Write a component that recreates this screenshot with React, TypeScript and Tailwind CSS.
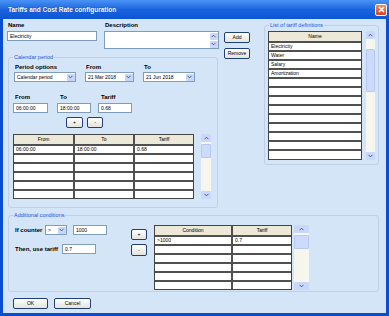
import React from "react";

// Windows XP style dialog: "Tariffs and Cost Rate configuration"

function Chev({ up = false }: { up?: boolean }) {
  return (
    <svg width="5" height="4" viewBox="0 0 5 4">
      <path
        d={up ? "M0.6 3.2L2.5 1.2L4.4 3.2" : "M0.6 0.9L2.5 2.9L4.4 0.9"}
        fill="none"
        stroke="#4b5f84"
        strokeWidth="1"
      />
    </svg>
  );
}

function Label({ children, className = "" }: { children: React.ReactNode; className?: string }) {
  return (
    <div className={`text-[6px] font-bold leading-[8px] text-black whitespace-nowrap ${className}`}>
      {children}
    </div>
  );
}

function Field({ value = "", className = "" }: { value?: string; className?: string }) {
  return (
    <div
      className={`h-[10px] bg-white border border-[#7f9db9] text-[5px] leading-[8px] pl-[2px] whitespace-nowrap ${className}`}
    >
      {value}
    </div>
  );
}

function Select({ value, className = "" }: { value: string; className?: string }) {
  return (
    <div className={`h-[10px] bg-white border border-[#7f9db9] flex ${className}`}>
      <div className="flex-1 text-[5px] leading-[8px] pl-[2px] whitespace-nowrap overflow-hidden">{value}</div>
      <div className="w-[8px] my-[0.5px] mr-[0.5px] bg-[#c6d5fb] rounded-[1px] flex items-center justify-center">
        <Chev />
      </div>
    </div>
  );
}

function Btn({ children, className = "" }: { children: React.ReactNode; className?: string }) {
  return (
    <div
      className={`border border-[#1f3f78] rounded-[2px] bg-linear-to-b from-white to-[#e4e3dc] flex items-center justify-center text-[5px] leading-none text-black ${className}`}
    >
      {children}
    </div>
  );
}

function ArrowBtn({ up = false }: { up?: boolean }) {
  return (
    <div className="h-[8px] bg-[#c8d7fa] rounded-[1px] flex items-center justify-center">
      <Chev up={up} />
    </div>
  );
}

function VScroll({ className = "", thumbTop, thumbH }: { className?: string; thumbTop: string; thumbH: string }) {
  return (
    <div className={`flex flex-col bg-[#f6f5ee] ${className}`}>
      <ArrowBtn up />
      <div className={`${thumbTop} ${thumbH} bg-[#ccdafb] border border-[#b8c8f2] rounded-[1px]`} />
      <div className="flex-1" />
      <ArrowBtn />
    </div>
  );
}

function Grid({
  cols,
  head,
  rows,
  count,
  className = "",
}: {
  cols: string[];
  head: string[];
  rows: string[][];
  count: number;
  className?: string;
}) {
  const all = Array.from({ length: count }, (_, i) => rows[i] ?? head.map(() => ""));
  return (
    <div className={`border border-[#444] bg-white ${className}`}>
      <div className="h-[9px] flex bg-[#ece9d8]">
        {head.map((h, i) => (
          <div
            key={h}
            className={`${cols[i]} text-[5px] leading-[9px] text-center ${i < head.length - 1 ? "border-r-2 border-[#505050]" : ""}`}
          >
            {h}
          </div>
        ))}
      </div>
      {all.map((r, ri) => (
        <div key={ri} className="h-[9px] flex border-t-2 border-[#505050]">
          {r.map((c, ci) => (
            <div
              key={ci}
              className={`${cols[ci]} text-[5px] leading-[7px] pl-[2px] ${ci < r.length - 1 ? "border-r-2 border-[#505050]" : ""}`}
            >
              {c}
            </div>
          ))}
        </div>
      ))}
    </div>
  );
}

function Group({
  title,
  className = "",
  children,
}: {
  title: string;
  className?: string;
  children: React.ReactNode;
}) {
  return (
    <fieldset className={`border border-[#bfd0e6] rounded-[3px] ${className}`}>
      <legend className="ml-[4px] px-[1px] text-[5.5px] leading-[8px] text-[#1b55df] whitespace-nowrap">
        {title}
      </legend>
      {children}
    </fieldset>
  );
}

export default function App() {
  return (
    <div className="w-[389px] h-[316px] flex flex-col bg-[#0b4dd0] font-['Liberation_Sans',Arial,sans-serif] overflow-hidden">
      {/* Title bar */}
      <div className="h-[19px] shrink-0 flex items-center bg-linear-to-b from-[#4a93f5] via-[#1a64df] to-[#0c55d3]">
        <span className="ml-[8px] text-[6.5px] font-bold text-white [text-shadow:0_0_1px_#0a2f8a]">
          Tariffs and Cost Rate configuration
        </span>
        <div className="ml-auto mr-[2px] w-[12px] h-[12px] rounded-[2px] border border-white bg-linear-to-b from-[#f08a63] to-[#d9401b] flex items-center justify-center">
          <svg width="7" height="7" viewBox="0 0 7 7">
            <path d="M1 1L6 6M6 1L1 6" stroke="white" strokeWidth="1.6" />
          </svg>
        </div>
      </div>

      {/* Body */}
      <div className="flex-1 mx-[3px] mb-[3px] bg-[#d5e5f8] flex flex-col">
        <div className="flex">
          {/* Left column */}
          <div className="ml-[4px] w-[212px]">
            <div className="flex pt-[2px]">
              <div className="w-[90px]">
                <Label className="ml-[1px] mb-[2px]">Name</Label>
                <Field value="Electricity" />
              </div>
              <div className="ml-[7px] w-[115px]">
                <Label className="ml-[1px] mb-[2px]">Description</Label>
                <div className="h-[18px] bg-white border border-[#7f9db9] flex justify-end">
                  <div className="w-[8px] flex flex-col gap-[1px] py-[0.5px] mr-[0.5px]">
                    <ArrowBtn up />
                    <ArrowBtn />
                  </div>
                </div>
              </div>
            </div>

            <Group title="Calendar period" className="mt-[4px] ml-[1px] w-[210px] pb-[8px]">
              <div className="flex pt-[2px] pl-[5px]">
                <div>
                  <Label className="ml-[1px] mb-[1px]">Period options</Label>
                  <Select value="Calendar period" className="w-[62px]" />
                </div>
                <div className="ml-[9px]">
                  <Label className="ml-[1px] mb-[1px]">From</Label>
                  <Select value="21 Mar 2018" className="w-[49px]" />
                </div>
                <div className="ml-[9px]">
                  <Label className="ml-[1px] mb-[1px]">To</Label>
                  <Select value="21 Jun 2018" className="w-[52px]" />
                </div>
              </div>

              <div className="flex mt-[11px] pl-[4px]">
                <div>
                  <Label className="ml-[2px] mb-[2px]">From</Label>
                  <Field value="06:00:00" className="w-[35px]" />
                </div>
                <div className="ml-[9px]">
                  <Label className="ml-[3px] mb-[2px]">To</Label>
                  <Field value="18:00:00" className="w-[34px]" />
                </div>
                <div className="ml-[7px]">
                  <Label className="ml-[3px] mb-[2px]">Tariff</Label>
                  <Field value="0.68" className="w-[34px]" />
                </div>
              </div>

              <div className="flex mt-[4px] ml-[57px] gap-[4px]">
                <Btn className="w-[17px] h-[11px]">+</Btn>
                <Btn className="w-[16px] h-[11px]">-</Btn>
              </div>

              <div className="flex mt-[6px] ml-[4px]">
                <Grid
                  cols={["w-[61px]", "w-[60px]", "flex-1"]}
                  head={["From", "To", "Tariff"]}
                  rows={[["06:00:00", "18:00:00", "0.68"]]}
                  count={6}
                  className="w-[181px]"
                />
                <VScroll className="ml-[7px] w-[10px] h-[65px]" thumbTop="mt-[2px]" thumbH="h-[14px]" />
              </div>
            </Group>
          </div>

          {/* Add / Remove */}
          <div className="ml-[5px] pt-[13px] w-[26px] flex flex-col">
            <Btn className="h-[11px]">Add</Btn>
            <Btn className="h-[11px] mt-[5px]">Remove</Btn>
          </div>

          {/* List of tariff definitions */}
          <Group title="List of tariff definitions" className="ml-[14px] mt-[2px] w-[115px] h-[144px] self-start">
            <div className="flex mt-[2px] ml-[3px]">
              <Grid
                cols={["flex-1"]}
                head={["Name"]}
                rows={[["Electricity"], ["Water"], ["Salary"], ["Amortization"]]}
                count={13}
                className="w-[94px]"
              />
              <VScroll className="ml-[4px] w-[9px] h-[129px]" thumbTop="mt-[10px]" thumbH="h-[43px]" />
            </div>
          </Group>
        </div>

        {/* Additional conditions */}
        <Group title="Additional conditions" className="mt-[3px] ml-[5px] w-[371px] pb-[1px]">
          <div className="flex">
            <div className="w-[122px] pl-[6px]">
              <div className="flex items-center mt-[6px]">
                <Label className="w-[30px]">If counter</Label>
                <Select value=">" className="w-[22px]" />
                <Field value="1000" className="ml-[6px] w-[34px]" />
              </div>
              <div className="flex items-center mt-[9px]">
                <Label className="w-[47px]">Then, use tariff</Label>
                <Field value="0.7" className="w-[34px]" />
              </div>
            </div>
            <div className="flex flex-col mt-[10px] gap-[4px] w-[16px]">
              <Btn className="h-[11px]">+</Btn>
              <Btn className="h-[12px]">-</Btn>
            </div>
            <div className="flex mt-[6px] ml-[7px]">
              <Grid
                cols={["w-[78px]", "flex-1"]}
                head={["Condition", "Tariff"]}
                rows={[[">1000", "0.7"]]}
                count={6}
                className="w-[138px]"
              />
              <VScroll className="ml-[2px] w-[15px] h-[65px]" thumbTop="mt-[2px]" thumbH="h-[14px]" />
            </div>
          </div>
        </Group>

        <div className="flex mt-[6px] ml-[10px] gap-[6px]">
          <Btn className="w-[35px] h-[11px]">OK</Btn>
          <Btn className="w-[37px] h-[11px]">Cancel</Btn>
        </div>
      </div>
    </div>
  );
}
